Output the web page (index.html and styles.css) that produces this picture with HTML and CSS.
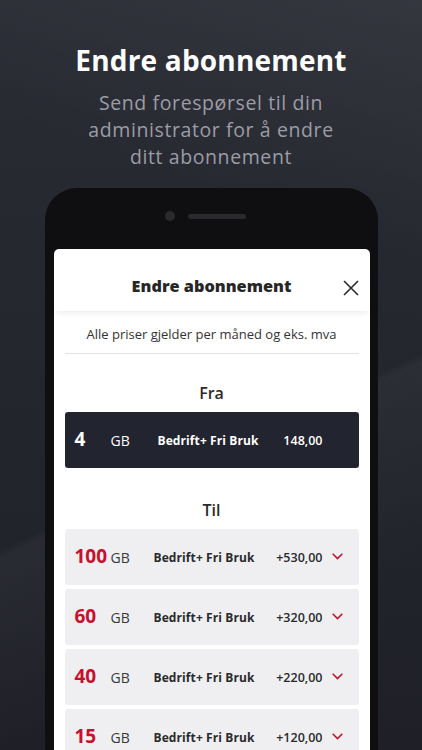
FILE: index.html
```html
<!DOCTYPE html>
<html lang="no">
<head>
<meta charset="utf-8">
<title>Endre abonnement</title>
<link rel="stylesheet" href="styles.css">
</head>
<body>
<div class="page">
  <header class="hero">
    <h1 class="hero-title">Endre abonnement</h1>
    <p class="hero-sub">Send forespørsel til din administrator for å endre ditt abonnement</p>
  </header>
  <div class="phone">
    <div class="phone-top">
      <span class="cam"></span>
      <span class="speaker"></span>
    </div>
    <div class="screen">
      <div class="modal-head">
        <h2 class="modal-title">Endre abonnement</h2>
        <svg class="close" width="16" height="16" viewBox="0 0 16 16"><path d="M1 1L15 15M15 1L1 15" stroke="#2a2a2a" stroke-width="1.6" fill="none"/></svg>
      </div>
      <p class="note">Alle priser gjelder per måned og eks. mva</p>
      <h3 class="section">Fra</h3>
      <div class="row row-current">
        <span class="num">4</span>
        <span class="gb">GB</span>
        <span class="name">Bedrift+ Fri Bruk</span>
        <span class="price">148,00</span>
        <span class="chev-slot"></span>
      </div>
      <h3 class="section section-til">Til</h3>
      <div class="list">
        <div class="row">
          <span class="num">100</span>
          <span class="gb">GB</span>
          <span class="name">Bedrift+ Fri Bruk</span>
          <span class="price">+530,00</span>
          <span class="chev-slot"><svg width="11" height="7" viewBox="0 0 11 7"><path d="M0.7 0.8L5.5 5.6L10.3 0.8" stroke="#c8102e" stroke-width="1.5" fill="none"/></svg></span>
        </div>
        <div class="row">
          <span class="num">60</span>
          <span class="gb">GB</span>
          <span class="name">Bedrift+ Fri Bruk</span>
          <span class="price">+320,00</span>
          <span class="chev-slot"><svg width="11" height="7" viewBox="0 0 11 7"><path d="M0.7 0.8L5.5 5.6L10.3 0.8" stroke="#c8102e" stroke-width="1.5" fill="none"/></svg></span>
        </div>
        <div class="row">
          <span class="num">40</span>
          <span class="gb">GB</span>
          <span class="name">Bedrift+ Fri Bruk</span>
          <span class="price">+220,00</span>
          <span class="chev-slot"><svg width="11" height="7" viewBox="0 0 11 7"><path d="M0.7 0.8L5.5 5.6L10.3 0.8" stroke="#c8102e" stroke-width="1.5" fill="none"/></svg></span>
        </div>
        <div class="row">
          <span class="num">15</span>
          <span class="gb">GB</span>
          <span class="name">Bedrift+ Fri Bruk</span>
          <span class="price">+120,00</span>
          <span class="chev-slot"><svg width="11" height="7" viewBox="0 0 11 7"><path d="M0.7 0.8L5.5 5.6L10.3 0.8" stroke="#c8102e" stroke-width="1.5" fill="none"/></svg></span>
        </div>
      </div>
    </div>
  </div>
</div>
</body>
</html>
```

FILE: styles.css
```css
* { box-sizing: border-box; }
html, body {
  margin: 0;
  padding: 0;
}
body {
  width: 422px;
  height: 750px;
  overflow: hidden;
  font-family: "Open Sans", "Noto Sans", sans-serif;
  background: #25272f;
}
.page {
  width: 422px;
  height: 750px;
  overflow: hidden;
  background:
    linear-gradient(200deg, rgba(255,255,255,0.05) 0%, rgba(255,255,255,0) 30%),
    linear-gradient(155deg, rgba(255,255,255,0) 58%, rgba(255,255,255,0.035) 59%, rgba(255,255,255,0) 80%),
    linear-gradient(180deg, #2a2c35 0%, #23252d 60%, #1f2027 100%);
}
.hero {
  text-align: center;
  padding-top: 41px;
}
.hero-title {
  margin: 0;
  color: #ffffff;
  font-size: 28px;
  font-weight: 700;
  line-height: 38px;
  letter-spacing: 0.2px;
}
.hero-sub {
  margin: 10px auto 0;
  width: 264px;
  color: #9c9ca5;
  font-size: 19.5px;
  line-height: 27px;
  letter-spacing: 0.6px;
}
.phone {
  width: 333px;
  margin: 18px auto 0;
  height: 600px;
  background: #0f0f12;
  border-radius: 32px 32px 0 0;
  padding: 0 8px 0 9px;
}
.phone-top {
  height: 61px;
  display: flex;
  align-items: center;
  justify-content: center;
  gap: 13px;
  padding-right: 12px;
  padding-bottom: 5px;
}
.cam {
  width: 10px;
  height: 10px;
  border-radius: 50%;
  background: #2a2a2e;
}
.speaker {
  width: 58px;
  height: 5px;
  border-radius: 3px;
  background: #2a2a2e;
}
.screen {
  background: #ffffff;
  border-radius: 5px 5px 0 0;
  height: 540px;
  color: #232323;
}
.modal-head {
  height: 62px;
  display: flex;
  align-items: center;
  justify-content: center;
  position: relative;
  box-shadow: 0 4px 6px -2px rgba(0,0,0,0.08);
  border-radius: 5px 5px 0 0;
}
.modal-title {
  margin: 0;
  font-size: 16.3px;
  font-weight: 800;
  color: #262626;
  padding-top: 12px;
}
.close {
  position: absolute;
  right: 11px;
  top: 31px;
}
.note {
  margin: 0 11px;
  padding: 14px 0 10px;
  font-size: 13px;
  text-align: center;
  color: #333;
  border-bottom: 1px solid #e4e4e8;
}
.section {
  margin: 0;
  text-align: center;
  font-size: 16px;
  font-weight: 600;
  color: #2b2b2b;
  height: 58px;
  padding-top: 28px;
  line-height: 22px;
}
.section-til {
  height: 61px;
  padding-top: 31px;
}
.list {
  display: flex;
  flex-direction: column;
  gap: 4px;
}
.row {
  margin: 0 11px;
  height: 56px;
  border-radius: 3px;
  background: #efeff1;
  display: flex;
  align-items: center;
  padding-left: 10px;
  color: #2a2a2a;
}
.row-current {
  background: #222430;
  color: #ffffff;
}
.num {
  min-width: 36px;
  font-size: 19px;
  font-weight: 700;
  color: #c8102e;
  padding-bottom: 2px;
}
.row-current .num { color: #ffffff; }
.gb {
  width: 43px;
  font-size: 14px;
  color: #3a3a3a;
}
.row-current .gb { color: #ffffff; width: 47px; }
.name {
  flex: 1;
  font-size: 12px;
  font-weight: 700;
  letter-spacing: 0.1px;
}
.price {
  font-size: 12.5px;
  font-weight: 600;
  text-align: right;
}
.chev-slot {
  width: 36px;
  display: flex;
  justify-content: flex-end;
  padding-right: 16px;
  padding-bottom: 2px;
}
```
